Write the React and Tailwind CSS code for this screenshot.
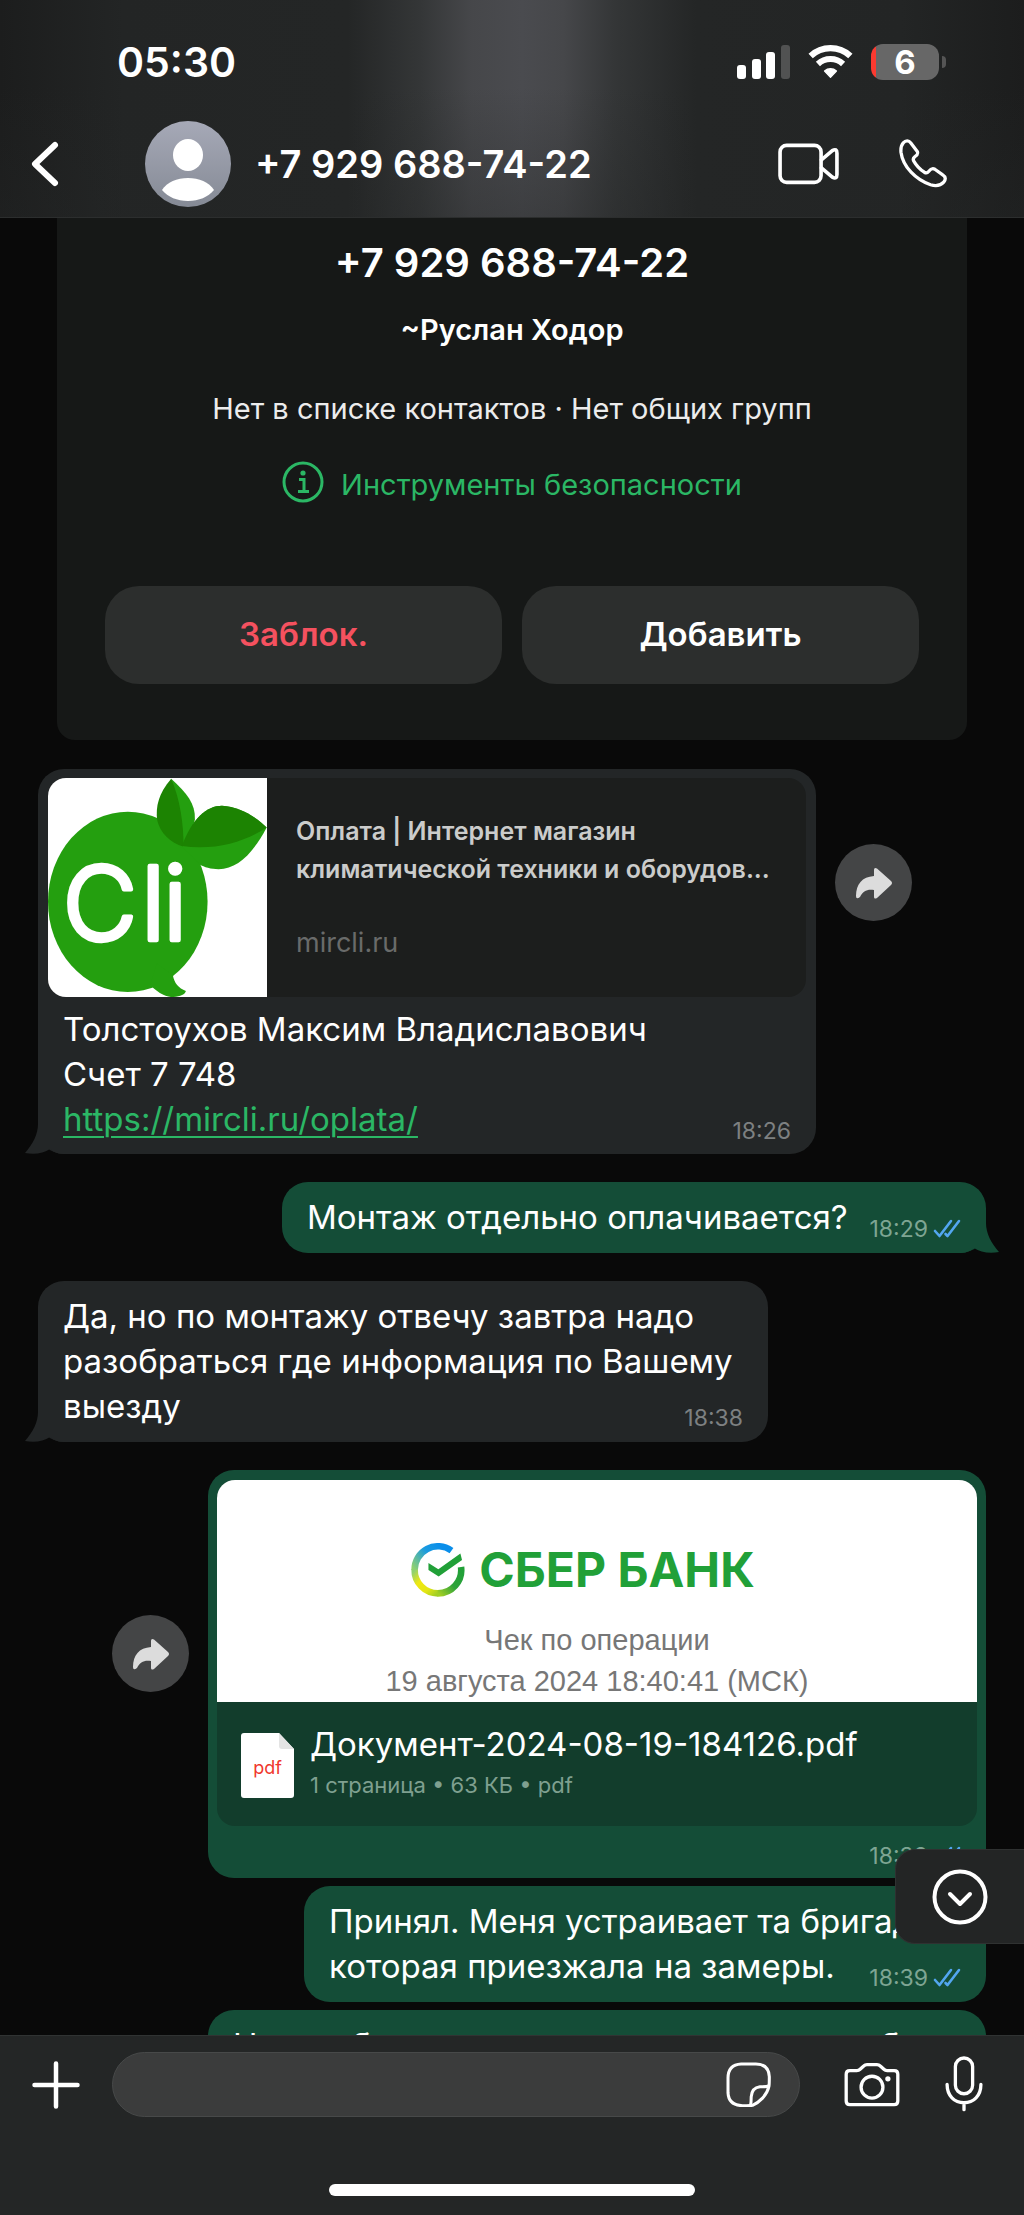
import React from "react";

function SignalIcon() {
  return (
    <svg viewBox="0 0 53 36" className="h-9 w-[53px]" aria-hidden="true">
      <rect x="0" y="21" width="9" height="14" rx="3" fill="#fff" />
      <rect x="15" y="15" width="9" height="20" rx="3" fill="#fff" />
      <rect x="29" y="8" width="9" height="27" rx="3" fill="#fff" />
      <rect x="44" y="1" width="9" height="34" rx="3" fill="#515252" />
    </svg>
  );
}

function WifiIcon() {
  return (
    <svg viewBox="252 36 136 108" className="h-9 w-[45px]" fill="none" stroke="#fff" aria-hidden="true">
      <path d="M260 72 A88 88 0 0 1 380 72" strokeWidth="19" />
      <path d="M282 96 A55 55 0 0 1 358 96" strokeWidth="18" />
      <path d="M302 117 A28 28 0 0 1 338 117 L320 136 Z" fill="#fff" strokeWidth="4" strokeLinejoin="round" />
    </svg>
  );
}

function Battery({ level }) {
  return (
    <div className="flex items-center gap-[3px]" role="img" aria-label={`${level}%`}>
      <div className="flex h-9 w-[68px] items-center justify-center rounded-[12px] bg-[linear-gradient(90deg,#fb3a30_5px,#676767_5px)] text-[33px] font-bold leading-9">
        {level}
      </div>
      <div className="h-3 w-1 rounded-r-full bg-[#555]" />
    </div>
  );
}

function VideoIcon() {
  return (
    <svg viewBox="163 333 184 130" className="h-[43px] w-[61px]" fill="none" stroke="#fff" strokeWidth="11" strokeLinejoin="round" strokeLinecap="round" aria-hidden="true">
      <rect x="169" y="340" width="124" height="112" rx="20" />
      <path d="M294 384 L327 356 Q341 348 341 364 V428 Q341 444 327 436 L294 408" />
    </svg>
  );
}

function PhoneIcon() {
  return (
    <svg viewBox="522 324 152 152" className="size-[50px]" fill="none" stroke="#fff" strokeWidth="10" strokeLinejoin="round" strokeLinecap="round" aria-hidden="true">
      <path d="M538 336 C545 328 555 328 561 336 L580 361 C585 369 580 373 573 378 C567 383 567 386 570 391 C578 405 590 417 602 425 C607 428 611 428 615 423 C621 415 626 411 634 416 L658 433 C667 439 668 447 661 455 C651 466 637 468 621 463 C577 448 537 409 531 364 C530 352 531 344 538 336 Z" />
    </svg>
  );
}

function Avatar() {
  return (
    <svg viewBox="0 0 86 86" className="size-[86px] shrink-0" aria-hidden="true">
      <defs>
        <linearGradient id="avatarBg" x1="0" y1="0" x2="0" y2="1">
          <stop offset="0" stopColor="#a6a9b7" />
          <stop offset="1" stopColor="#858a95" />
        </linearGradient>
      </defs>
      <circle cx="43" cy="43" r="43" fill="url(#avatarBg)" />
      <ellipse cx="43" cy="34" rx="15" ry="16" fill="#fff" />
      <path d="M17 69 C22 61 32 57 43 57 C54 57 64 61 69 69 C63 76 54 80 43 80 C32 80 23 76 17 69 Z" fill="#fff" />
    </svg>
  );
}

function Header() {
  return (
    <header className="relative shrink-0 border-b border-[#2c2e2e] bg-[linear-gradient(90deg,#1c1d1d_0%,#232525_12%,#242626_34%,#343637_41%,#46474a_46%,#4a4b4f_51%,#46474a_55%,#343637_60%,#242626_68%,#232525_88%,#1c1d1d_100%)]">
      <div className="bg-[linear-gradient(180deg,transparent_40%,rgba(36,38,38,0.35)_100%)]">
        <div className="flex h-[124px] items-center justify-between pl-[117px] pr-[78px]">
          <span className="text-[41px] font-semibold leading-none">05:30</span>
          <div className="flex items-center gap-[18px]">
            <SignalIcon />
            <WifiIcon />
            <Battery level={6} />
          </div>
        </div>
        <div className="flex h-[93px] items-start pl-[26px] pr-[76px]">
          <button type="button" aria-label="Назад" className="flex h-20 w-[38px] items-center">
            <svg viewBox="0 0 38 50" className="h-[50px] w-[38px]" fill="none" stroke="#fff" strokeWidth="6" strokeLinecap="round" strokeLinejoin="round" aria-hidden="true">
              <path d="M29 6 L9 25 L29 44" />
            </svg>
          </button>
          <div className="ml-[81px] flex h-20 flex-1 items-center gap-6">
            <Avatar />
            <h1 className="whitespace-nowrap text-[38px] font-semibold leading-none">+7 929 688-74-22</h1>
          </div>
          <div className="flex h-20 items-center gap-[59px]">
            <button type="button" aria-label="Видеозвонок"><VideoIcon /></button>
            <button type="button" aria-label="Позвонить"><PhoneIcon /></button>
          </div>
        </div>
      </div>
    </header>
  );
}

function ContactCard() {
  return (
    <section className="mx-[57px] flex flex-col items-center rounded-b-[18px] bg-[#161817] px-12 pb-14 pt-[23px]">
      <h2 className="text-[40px] font-semibold leading-[44px]">+7 929 688-74-22</h2>
      <p className="mt-[29px] text-[29px] font-semibold leading-8">~Руслан Ходор</p>
      <p className="mt-[47px] text-[29px] leading-8 text-[#ececec]">Нет в списке контактов · Нет общих групп</p>
      <a href="#safety" className="mt-9 flex items-center gap-[17px] text-[29px] leading-[48px] text-[#2bb765]">
        <svg viewBox="0 0 42 42" className="mb-[6px] size-[42px]" fill="none" stroke="currentColor" strokeWidth="3" aria-hidden="true">
          <circle cx="21" cy="21" r="19" />
          <circle cx="21" cy="12" r="2.6" fill="currentColor" stroke="none" />
          <path d="M17 18.500 H22 V30.500 M16 30.500 H27" />
        </svg>
        Инструменты безопасности
      </a>
      <div className="mt-[77px] grid w-full grid-cols-2 gap-5">
        <button type="button" className="h-[98px] rounded-[34px] bg-[#2c2e2d] text-[33px] font-semibold text-[#f5515f]">Заблок.</button>
        <button type="button" className="h-[98px] rounded-[34px] bg-[#2c2e2d] text-[33px] font-semibold">Добавить</button>
      </div>
    </section>
  );
}

function Tail({ side }) {
  const right = side === "right";
  return (
    <svg
      viewBox="0 0 40 30"
      className={
        right
          ? "absolute -right-[13px] bottom-0 h-[30px] w-10 -scale-x-100 text-[#144d37]"
          : "absolute -left-[13px] bottom-0 h-[30px] w-10 text-[#232627]"
      }
      fill="currentColor"
      aria-hidden="true"
    >
      <path d="M13 0 C13 10 8 20 0 29 C10 31 19 29 25 25 C30 29 34 30 40 30 V0 Z" />
    </svg>
  );
}

function Meta({ time, read }) {
  return (
    <span className="flex shrink-0 items-center gap-[5px] text-[23px] leading-[22px]">
      <time className={read ? "text-[#7ea593]" : "text-[#7d8081]"}>{time}</time>
      {read && (
        <svg viewBox="0 0 28 20" className="h-5 w-7" fill="none" stroke="#53a6f0" strokeWidth="2.600" strokeLinecap="round" strokeLinejoin="round" aria-label="Прочитано">
          <path d="M2 12 L6.500 17 L18 2" />
          <path d="M12.500 15 L14.500 17 L26 2" />
        </svg>
      )}
    </span>
  );
}

function ForwardButton({ className }) {
  return (
    <button type="button" aria-label="Переслать" className={`flex size-[77px] shrink-0 items-center justify-center rounded-full bg-[#444546] ${className}`}>
      <svg viewBox="0 0 36 32" className="h-8 w-9" fill="#dcdcdc" aria-hidden="true">
        <path d="M18 9 V3 Q18 0 21 1.500 L35 14 Q37 16 35 18 L21 31 Q18 32.500 18 30 V23 C11 22 7 24 4 30 Q0 33 0 29 C0 17 6 10 18 9 Z" />
      </svg>
    </button>
  );
}

function CliLogo() {
  return (
    <svg viewBox="144 84 656 656" className="size-[219px] shrink-0 bg-white" role="img" aria-label="Cli">
      <ellipse cx="383" cy="455" rx="239" ry="270" fill="#249f0f" />
      <path d="M450 704 C478 732 500 740 520 740 C540 739 556 731 557 722 C535 714 522 698 518 675 L470 640 Z" fill="#249f0f" />
      <path d="M513 86 C560 130 586 160 584 208 L560 300 L520 280 Z" fill="#249f0f" />
      <path d="M513 86 C475 130 466 170 471 210 C480 250 510 278 550 290 C550 220 540 150 513 86 Z" fill="#1c8302" />
      <path d="M547 290 C575 205 620 167 665 167 C715 170 760 195 799 232 C755 315 710 355 655 357 C632 357 612 351 598 343 Z" fill="#249f0f" />
      <path d="M545 288 C575 205 620 167 665 167 C715 170 760 195 799 232 C735 275 645 302 545 288 Z" fill="#1c8302" />
      <text y="568" x="188 423 489" fontFamily="Inter, sans-serif" fontSize="306" fontWeight="300" fill="#fff" stroke="#fff" strokeWidth="13" strokeLinejoin="round">Cli</text>
    </svg>
  );
}

function SberLogo() {
  return (
    <svg viewBox="58 66 162 164" className="size-[54px]" fill="none" aria-hidden="true">
      <defs>
        <linearGradient id="ringTop" gradientUnits="userSpaceOnUse" x1="150" y1="78" x2="69" y2="148">
          <stop offset="0" stopColor="#0a8eea" />
          <stop offset="0.4" stopColor="#1a9be0" />
          <stop offset="1" stopColor="#8fd170" />
        </linearGradient>
        <linearGradient id="ringLeft" gradientUnits="userSpaceOnUse" x1="69" y1="148" x2="139" y2="218">
          <stop offset="0" stopColor="#8fd170" />
          <stop offset="0.35" stopColor="#efe812" />
          <stop offset="0.7" stopColor="#e4e614" />
          <stop offset="1" stopColor="#a2cf24" />
        </linearGradient>
        <linearGradient id="ringRight" gradientUnits="userSpaceOnUse" x1="139" y1="218" x2="208" y2="150">
          <stop offset="0" stopColor="#a2cf24" />
          <stop offset="0.5" stopColor="#2ea33a" />
          <stop offset="1" stopColor="#21a038" />
        </linearGradient>
      </defs>
      <g strokeWidth="20">
        <path d="M180 89 A71 71 0 0 0 68 148" stroke="url(#ringTop)" />
        <path d="M68 146 A71 71 0 0 0 139 219" stroke="url(#ringLeft)" />
        <path d="M138 219 A71 71 0 0 0 209 139" stroke="url(#ringRight)" />
      </g>
      <path d="M110 127 L140 146 L207 98 L212 118 L141 168 L110 148 Z" fill="#21a038" />
    </svg>
  );
}

function PdfIcon() {
  return (
    <div className="relative flex h-[65px] w-[53px] shrink-0 items-center justify-center">
      <svg viewBox="0 0 53 65" className="absolute inset-0" aria-hidden="true">
        <path d="M3 0 H38 L53 16 V62 Q53 65 50 65 H3 Q0 65 0 62 V3 Q0 0 3 0 Z" fill="#fff" />
        <path d="M38 0 L53 16 H41 Q38 16 38 13 Z" fill="#e4e4e4" />
      </svg>
      <span className="relative pt-1 text-[18px] leading-none text-[#f0372d]">pdf</span>
    </div>
  );
}

const BODY = "text-[33px] leading-[45px]";

function TextBubble({ side, lines, time, tail, width }) {
  const out = side === "right";
  const last = lines.length - 1;
  return (
    <div className={`relative max-w-full rounded-[26px] px-[25px] py-[13px] ${BODY} ${width} ${out ? "self-end bg-[#144d37]" : "self-start bg-[#232627]"}`}>
      {tail && <Tail side={side} />}
      <div className="relative">
        {lines.slice(0, last).map((line) => (
          <p key={line} className="whitespace-nowrap">{line}</p>
        ))}
        <div className="flex items-end justify-between">
          <p className="whitespace-nowrap">{lines[last]}</p>
          <Meta time={time} read={out} />
        </div>
      </div>
    </div>
  );
}

function LinkMessage() {
  return (
    <div className="flex items-start gap-[19px]">
      <article className="relative w-[778px] rounded-[26px] bg-[#232627] px-[10px] pb-3 pt-[9px]">
        <Tail side="left" />
        <div className="flex overflow-hidden rounded-[18px] bg-[#1c1e1d]">
          <CliLogo />
          <div className="min-w-0 pl-[29px] pt-[34px] leading-[38px]">
            <p className="whitespace-nowrap text-[25px] font-semibold text-[#cbcccb]">
              Оплата | Интернет магазин
              <br />
              климатической техники и оборудов...
            </p>
            <p className="mt-9 text-[27px] text-[#696b6a]">mircli.ru</p>
          </div>
        </div>
        <div className={`relative mt-[10px] px-[15px] ${BODY}`}>
          <p>Толстоухов Максим Владиславович</p>
          <p>Счет 7 748</p>
          <div className="flex items-end justify-between">
            <a href="https://mircli.ru/oplata/" className="text-[#2bb765] underline decoration-2 underline-offset-[5px]">https://mircli.ru/oplata/</a>
            <Meta time="18:26" />
          </div>
        </div>
      </article>
      <ForwardButton className="mt-[75px]" />
    </div>
  );
}

function DocumentMessage() {
  return (
    <div className="flex items-start justify-end gap-[19px]">
      <ForwardButton className="mt-[145px]" />
      <article className="w-[778px] rounded-[26px] bg-[#144d37] px-[9px] pb-[11px] pt-[10px]">
        <div className="overflow-hidden rounded-[18px] bg-[#123d2c]">
          <div className="flex h-[222px] flex-col items-center bg-white pt-[63px] font-['Liberation_Sans',sans-serif] text-[29px] leading-[41px] text-[#777]">
            <div className="mr-7 flex h-[54px] items-center gap-[14px]">
              <SberLogo />
              <span className="whitespace-nowrap font-[Inter,sans-serif] text-[48px] font-bold leading-[54px] text-[#21a038]">СБЕР БАНК</span>
            </div>
            <p className="mt-[23px]">Чек по операции</p>
            <p>19 августа 2024 18:40:41 (МСК)</p>
          </div>
          <div className="flex h-[124px] gap-4 pl-6 pt-[31px]">
            <PdfIcon />
            <div className="-mt-2">
              <p className="whitespace-nowrap text-[33px] leading-[38px]">Документ-2024-08-19-184126.pdf</p>
              <p className="mt-[10px] text-[22px] leading-6 text-[#7fa090]">1 страница • 63 КБ • pdf</p>
            </div>
          </div>
        </div>
        <div className="mt-[19px] flex justify-end pr-4">
          <Meta time="18:39" read />
        </div>
      </article>
    </div>
  );
}

function Composer() {
  return (
    <footer className="relative shrink-0 border-t border-[#303333] bg-[#242626]">
      <div className="flex items-center pl-8 pr-10 pt-4">
        <button type="button" aria-label="Прикрепить" className="shrink-0">
          <svg viewBox="0 0 48 48" className="size-12" stroke="#fff" strokeWidth="4.500" strokeLinecap="round" aria-hidden="true">
            <path d="M24 2.500 V45.500 M2.500 24 H45.500" />
          </svg>
        </button>
        <div className="ml-8 flex h-[65px] flex-1 items-center rounded-full border border-[#474949] bg-[#3b3c3c] pr-7">
          <input type="text" aria-label="Сообщение" className="h-full min-w-0 flex-1 bg-transparent pl-7 text-[33px] outline-none" />
          <button type="button" aria-label="Стикеры">
            <svg viewBox="81 668 134 134" className="size-[45px]" fill="none" stroke="#fff" strokeWidth="9" strokeLinejoin="round" aria-hidden="true">
              <path d="M160 797 C180 788 203 768 209 740 Q210 735 210 712 Q208 674 170 674 H126 Q87 676 87 716 V760 Q89 797 130 798 Q150 799 160 797 Z" />
              <path d="M154 798 Q156 790 156 772 Q158 745 182 742 Q204 742 209 738" />
            </svg>
          </button>
        </div>
        <button type="button" aria-label="Камера" className="ml-[44px]">
          <svg viewBox="430 664 168 136" className="h-[45px] w-14" fill="none" stroke="#fff" strokeWidth="10" strokeLinejoin="round" aria-hidden="true">
            <path d="M447 690 H468 Q474 690 478 686 L489 676 Q493 672 499 672 H529 Q535 672 539 676 L550 686 Q554 690 560 690 H581 Q592 690 592 701 V782 Q592 793 581 793 H447 Q436 793 436 782 V701 Q436 690 447 690 Z" />
            <circle cx="514" cy="740" r="33" />
            <circle cx="562" cy="715" r="8" fill="#fff" stroke="none" />
          </svg>
        </button>
        <button type="button" aria-label="Голосовое сообщение" className="ml-[44px]">
          <svg viewBox="734 646 118 172" className="h-[57px] w-10" fill="none" stroke="#fff" strokeWidth="10" strokeLinecap="round" aria-hidden="true">
            <rect x="767" y="652" width="52" height="108" rx="26" />
            <path d="M742 732 C742 766 764 787 793 787 C822 787 844 766 844 732 M793 788 V808" />
          </svg>
        </button>
      </div>
      <div className="mx-auto mb-[19px] mt-[67px] h-3 w-[366px] rounded-full bg-white" />
    </footer>
  );
}

export default function App() {
  return (
    <div className="flex h-screen flex-col overflow-hidden bg-[#090909] font-[Inter,sans-serif] text-white">
      <Header />
      <main className="relative min-h-0 flex-1">
        <div className="h-full overflow-hidden">
          <ContactCard />
          <div className="mt-[29px] flex flex-col gap-7 px-[38px]">
            <LinkMessage />
            <TextBubble side="right" tail width="w-[704px]" time="18:29" lines={["Монтаж отдельно оплачивается?"]} />
            <TextBubble
              side="left"
              tail
              width="w-[730px]"
              time="18:38"
              lines={["Да, но по монтажу отвечу завтра надо", "разобраться где информация по Вашему", "выезду"]}
            />
            <div className="flex flex-col gap-2">
              <DocumentMessage />
              <TextBubble side="right" width="w-[682px]" time="18:39" lines={["Принял. Меня устраивает та бригада,", "которая приезжала на замеры."]} />
              <TextBubble side="right" width="w-[778px]" time="18:40" lines={["Нужно будет согласовать нам дату, чтобы"]} />
            </div>
          </div>
        </div>
        <button type="button" aria-label="Вниз" className="absolute bottom-[91px] right-0 flex h-[95px] w-[129px] items-center justify-center rounded-l-[20px] border border-r-0 border-[#2f3131] bg-[#232525]">
          <svg viewBox="0 0 56 56" className="size-14" fill="none" stroke="#fff" strokeWidth="4" strokeLinecap="round" strokeLinejoin="round" aria-hidden="true">
            <circle cx="28" cy="28" r="25.500" />
            <path d="M18 25 L28 35 L38 25" />
          </svg>
        </button>
      </main>
      <Composer />
    </div>
  );
}
